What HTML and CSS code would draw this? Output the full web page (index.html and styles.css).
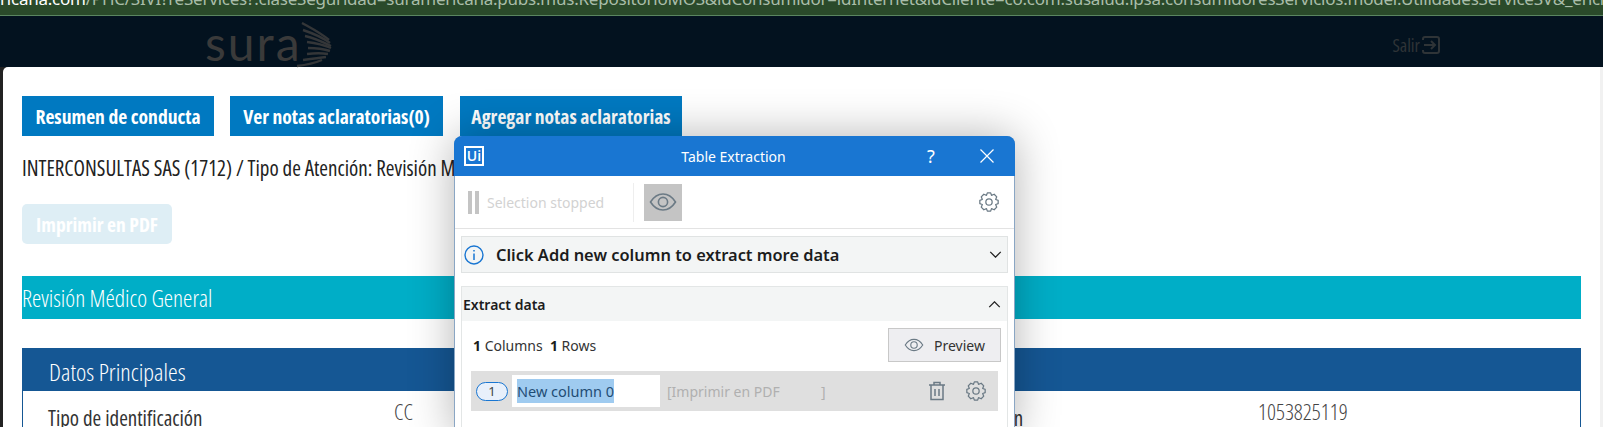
FILE: index.html
```html
<!DOCTYPE html>
<html lang="es">
<head>
    <meta charset="UTF-8">
    <title>Revisión Médico General</title>
    <link rel="stylesheet" href="styles.css">
</head>
<body>
    <svg class="defs" width="0" height="0">
        <symbol id="gear" viewBox="-12 -12 24 24">
            <polygon points="-2,-11 2,-11 3,-8 6.2,-9.3 9.3,-6.2 8,-3 11,-2 11,2 8,3 9.3,6.2 6.2,9.3 3,8 2,11 -2,11 -3,8 -6.2,9.3 -9.3,6.2 -8,3 -11,2 -11,-2 -8,-3 -9.3,-6.2 -6.2,-9.3 -3,-8" fill="none" stroke="#6b7a85" stroke-width="1.5" stroke-linejoin="round"/>
            <circle r="3.8" fill="none" stroke="#6b7a85" stroke-width="1.5"/>
        </symbol>
        <symbol id="eye" viewBox="0 0 28 20">
            <path d="M1.5 10C5 4.5 9 2 14 2s9 2.500 12.500 8C23 15.500 19 18 14 18S5 15.500 1.500 10z" fill="none" stroke="#6b7a85" stroke-width="1.6"/>
            <circle cx="14" cy="10" r="4.600" fill="none" stroke="#6b7a85" stroke-width="1.6"/>
        </symbol>
    </svg>

    <div class="urlbar">
        <span class="url"><b>ricana.com</b>/PHC/SIVI?reServices?.claseSeguridad=suramericana.pubs.mus.RepositorioMOS&amp;idConsumidor=idInternet&amp;idCliente=co.com.susalud.ipsa.consumidoresServicios.model.UtilidadesServiceSV&amp;_encrp</span>
    </div>

    <header class="topbar">
        <div class="logo">
            <span class="logo-text">sura</span>
            <svg class="logo-wing" viewBox="0 0 36 46">
                <g fill="none" stroke="#343638" stroke-width="2.400">
                    <path d="M6 1C15 6 25 11 33 18"/>
                    <path d="M7 8C16 11 26 15 34 21"/>
                    <path d="M9 14C18 16 27 20 35 24"/>
                    <path d="M11 20C19 21 28 23 35 26"/>
                    <path d="M12 26C20 26 28 27 34 29"/>
                    <path d="M11 32C19 31 26 31 32 32"/>
                    <path d="M7 38C15 37 23 36 30 35"/>
                    <path d="M1 44C10 43 19 41 26 38"/>
                </g>
            </svg>
        </div>
        <div class="salir">
            <span>Salir</span>
            <svg class="salir-icon" viewBox="0 0 18 18">
                <path d="M1 4V3Q1 1 3 1H15Q17 1 17 3V15Q17 17 15 17H3Q1 17 1 15V14" fill="none" stroke="#2f3437" stroke-width="2"/>
                <path d="M2 9H13M9 5L13 9L9 13" fill="none" stroke="#2f3437" stroke-width="2"/>
            </svg>
        </div>
    </header>

    <main class="card">
        <div class="actions">
            <button class="btn btn-resumen">Resumen de conducta</button>
            <button class="btn btn-ver">Ver notas aclaratorias(0)</button>
            <button class="btn btn-agregar">Agregar notas aclaratorias</button>
        </div>
        <p class="subtitle">INTERCONSULTAS SAS (1712) / Tipo de Atención: Revisión Médico General</p>
        <button class="btn-pdf">Imprimir en PDF</button>
        <h2 class="section-title">Revisión Médico General</h2>
        <section class="datos">
            <h3 class="datos-title">Datos Principales</h3>
            <div class="datos-row">
                <span class="dato-label">Tipo de identificación</span>
                <span class="dato-value">CC</span>
                <span class="dato-label">Número de identificación</span>
                <span class="dato-value">1053825119</span>
            </div>
        </section>
    </main>

    <div class="dialog">
        <div class="dialog-title">
            <span class="ui-logo">Ui</span>
            <span class="dialog-name">Table Extraction</span>
            <span class="dialog-help">?</span>
            <svg class="dialog-close" viewBox="0 0 14 14">
                <path d="M0.500 0.500L13.500 13.500M13.500 0.500L0.500 13.500" stroke="#fff" stroke-width="1.200"/>
            </svg>
        </div>
        <div class="toolbar">
            <span class="pause"></span>
            <span class="toolbar-text">Selection stopped</span>
            <span class="toolbar-sep"></span>
            <span class="eye-btn"><svg class="eye-big"><use href="#eye"/></svg></span>
            <svg class="gear gear-top"><use href="#gear"/></svg>
        </div>
        <div class="notice">
            <svg class="info" viewBox="0 0 20 20">
                <circle cx="10" cy="10" r="9" fill="none" stroke="#1976d2" stroke-width="1.400"/>
                <path d="M10 8.500V15M10 5V6.600" stroke="#1976d2" stroke-width="1.500"/>
            </svg>
            <span class="notice-text">Click Add new column to extract more data</span>
            <svg class="chevron" viewBox="0 0 14 8"><path d="M1 1L7 7L13 1" fill="none" stroke="#222" stroke-width="1.500"/></svg>
        </div>
        <div class="panel">
            <div class="panel-head">
                <span>Extract data</span>
                <svg class="chevron" viewBox="0 0 14 8"><path d="M1 7L7 1L13 7" fill="none" stroke="#222" stroke-width="1.500"/></svg>
            </div>
            <div class="panel-info">
                <span class="counts"><b>1</b> Columns &nbsp;<b>1</b> Rows</span>
                <button class="preview"><svg class="eye-small"><use href="#eye"/></svg>Preview</button>
            </div>
            <div class="col-row">
                <span class="col-num">1</span>
                <span class="col-input"><span class="col-sel">New column 0</span></span>
                <span class="col-source">[Imprimir en PDF<span class="col-close">]</span></span>
                <svg class="trash" viewBox="0 0 18 20">
                    <path d="M1 4H17M6 4V1.500H12V4M3 4V18.500H15V4M7 8V15M11 8V15" fill="none" stroke="#6b7a85" stroke-width="1.500"/>
                </svg>
                <svg class="gear gear-row"><use href="#gear"/></svg>
            </div>
        </div>
    </div>
</body>
</html>
```

FILE: styles.css
```css
:root {
    --condensed: 'Open Sans', 'Liberation Sans', sans-serif;
    --ui-font: 'Noto Sans', 'Open Sans', sans-serif;
    --blue-dark: #155794;
    --blue-btn: #0079c1;
    --teal: #00aec7;
    --dialog-blue: #1976d2;
}
* {
    box-sizing: border-box;
}
html, body {
    margin: 0;
    height: 427px;
    overflow: hidden;
}
body {
    position: relative;
    background: #222;
    font-family: var(--condensed);
}
.defs {
    position: absolute;
}

/* barra de la url */
.urlbar {
    height: 16px;
    background: #2a4a2a;
    border-bottom: 1px solid #5a8560;
    overflow: hidden;
    white-space: nowrap;
}
.url {
    display: block;
    margin-top: -11px;
    font-family: var(--ui-font);
    font-size: 17px;
    line-height: 20px;
    letter-spacing: -.23px;
    color: #a9bda9;
    font-stretch: 84%;
}
.url b {
    font-weight: 400;
    color: #fff;
}

/* cabecera */
.topbar {
    height: 51px;
    background: #03121f;
    display: flex;
    justify-content: space-between;
    padding: 6px 163px 0 205px;
}
.logo {
    display: flex;
    height: 46px;
}
.logo-text {
    width: 91px;
    font-family: 'Lato', sans-serif;
    font-size: 48px;
    line-height: 42px;
    color: #3a3a3a;
    letter-spacing: 2px;
}
.logo-wing {
    width: 36px;
    height: 46px;
}
.salir {
    display: flex;
    align-items: center;
    gap: 2px;
    height: 46px;
    font-size: 18px;
    font-stretch: 75%;
    color: #2f3437;
}
.salir-icon {
    width: 18px;
    height: 18px;
}

/* contenido */
.card {
    margin-left: 3px;
    height: 360px;
    background: #fff;
    border-right: 3px solid #f1f1f1;
    border-top-left-radius: 5px;
    padding: 29px 19px 0;
    overflow: hidden;
}
.actions {
    display: flex;
    gap: 16px;
}
.btn {
    height: 40px;
    border: none;
    background: var(--blue-btn);
    color: #fff;
    font-family: var(--condensed);
    font-size: 19.6px;
    font-weight: 700;
    font-stretch: 75%;
    padding: 0;
}
.btn-resumen { width: 192px; }
.btn-ver { width: 213px; }
.btn-agregar { width: 222px; margin-left: 1px; }
.subtitle {
    margin: 20px 0 0;
    height: 24px;
    font-size: 21px;
    line-height: 24px;
    font-stretch: 75%;
    color: #222;
    white-space: nowrap;
}
.btn-pdf {
    display: block;
    margin-top: 24px;
    width: 150px;
    height: 40px;
    border: none;
    border-radius: 5px;
    background: #deeef5;
    color: #fff;
    font-family: var(--condensed);
    font-size: 19.6px;
    font-weight: 700;
    font-stretch: 75%;
    padding: 0;
}
.section-title {
    margin: 32px 0 0;
    height: 43px;
    background: var(--teal);
    color: #fff;
    font-size: 23.5px;
    font-weight: 300;
    font-stretch: 75%;
    line-height: 45px;
}
.datos {
    margin-top: 29px;
    border: solid var(--blue-dark);
    border-width: 0 1px;
}
.datos-title {
    margin: 0 -1px;
    height: 43px;
    background: var(--blue-dark);
    color: #fff;
    font-size: 24.5px;
    font-weight: 300;
    font-stretch: 75%;
    line-height: 47px;
    padding-left: 27px;
}
.datos-row {
    display: grid;
    grid-template-columns: 346px 446px 418px 1fr;
    padding-left: 25px;
    font-stretch: 75%;
}
.dato-label {
    padding-top: 13px;
    font-size: 21px;
    line-height: 28px;
    color: #333;
}
.dato-value {
    padding-top: 6px;
    font-size: 22px;
    font-weight: 300;
    line-height: 28px;
    color: #444;
}

/* ventana flotante */
.dialog {
    position: absolute;
    left: 454px;
    top: 136px;
    width: 561px;
    height: 300px;
    background: #fff;
    border: 1px solid #8aa6c4;
    border-radius: 8px 8px 0 0;
    box-shadow: 0 0 45px rgba(0, 0, 0, .3);
    font-family: var(--ui-font);
}
.dialog-title {
    position: relative;
    height: 40px;
    margin: -1px -1px 0;
    padding: 0 0 0 10px;
    background: var(--dialog-blue);
    border-radius: 8px 8px 0 0;
    display: flex;
    align-items: center;
    color: #fff;
}
.ui-logo {
    width: 20px;
    height: 20px;
    border: 2px solid #fff;
    font-family: 'Open Sans', sans-serif;
    font-size: 14px;
    font-weight: 600;
    line-height: 15px;
    text-align: center;
}
.dialog-name {
    position: absolute;
    left: 120px;
    right: 122px;
    text-align: center;
    font-size: 14px;
}
.dialog-help {
    position: absolute;
    left: 473px;
    font-size: 18px;
}
.dialog-close {
    position: absolute;
    left: 526px;
    top: 13px;
    width: 14px;
    height: 14px;
}
.toolbar {
    display: flex;
    align-items: center;
    height: 53px;
    padding-left: 13px;
    border-bottom: 1px solid #e3e3e3;
    position: relative;
}
.pause {
    width: 11px;
    height: 23px;
    border: solid #c4c4c4;
    border-width: 0 4px;
}
.toolbar-text {
    margin-left: 8px;
    width: 146px;
    font-size: 14px;
    color: #d2d2d2;
}
.toolbar-sep {
    width: 1px;
    height: 39px;
    background: #eee;
}
.eye-btn {
    display: flex;
    align-items: center;
    justify-content: center;
    width: 38px;
    height: 37px;
    margin-left: 10px;
    background: #c4c4c4;
}
.eye-big {
    width: 28px;
    height: 20px;
}
.gear {
    width: 20px;
    height: 20px;
}
.gear-top {
    position: absolute;
    left: 524px;
    top: 16px;
}
.notice {
    display: flex;
    align-items: center;
    height: 37px;
    margin: 7px 6px 0;
    background: #f3f5f5;
    border: 1px solid #e0e3e3;
    padding: 0 5px 0 2px;
}
.info {
    width: 20px;
    height: 20px;
}
.notice-text {
    flex: 1;
    margin-left: 12px;
    font-size: 16.4px;
    font-weight: 600;
    color: #1c1c1c;
}
.chevron {
    width: 13px;
    height: 7px;
}
.panel {
    margin: 13px 6px 0;
    height: 160px;
    border: 1px solid #e3e6e6;
    padding-bottom: 10px;
}
.panel-head {
    display: flex;
    align-items: center;
    justify-content: space-between;
    height: 34px;
    padding: 0 6px 0 1px;
    background: #f3f5f5;
    font-size: 14px;
    font-weight: 600;
    color: #1c1c1c;
}
.panel-info {
    display: flex;
    align-items: center;
    justify-content: space-between;
    height: 34px;
    margin-top: 7px;
    padding: 0 6px 0 11px;
}
.counts {
    font-size: 14px;
    color: #333;
}
.counts b {
    font-weight: 700;
    color: #1c1c1c;
}
.preview {
    display: flex;
    align-items: center;
    width: 113px;
    height: 34px;
    padding: 0 0 0 15px;
    gap: 10px;
    background: #eeeef1;
    border: 1px solid #c8c8c8;
    font-family: var(--ui-font);
    font-size: 14px;
    color: #333;
}
.eye-small {
    width: 20px;
    height: 14px;
}
.col-row {
    display: flex;
    align-items: center;
    height: 40px;
    margin: 9px 9px 0;
    padding-left: 5px;
    background: #dfdfdf;
    font-size: 14.5px;
}
.col-num {
    width: 32px;
    height: 19px;
    border: 1px solid var(--dialog-blue);
    border-radius: 10px;
    background: #e8f0fb;
    text-align: center;
    line-height: 17px;
    font-size: 13px;
    color: #444;
}
.col-input {
    width: 148px;
    height: 32px;
    margin-left: 4px;
    padding-left: 5px;
    background: #fff;
    line-height: 32px;
}
.col-sel {
    background: #9fcbf0;
    color: #1f4d75;
    padding: 2px 0;
}
.col-source {
    position: relative;
    width: 261px;
    margin-left: 7px;
    color: #b0b0b0;
    font-size: 14px;
}
.col-close {
    position: absolute;
    left: 154px;
}
.trash {
    width: 18px;
    height: 20px;
}
.gear-row {
    margin-left: 20px;
}
```
